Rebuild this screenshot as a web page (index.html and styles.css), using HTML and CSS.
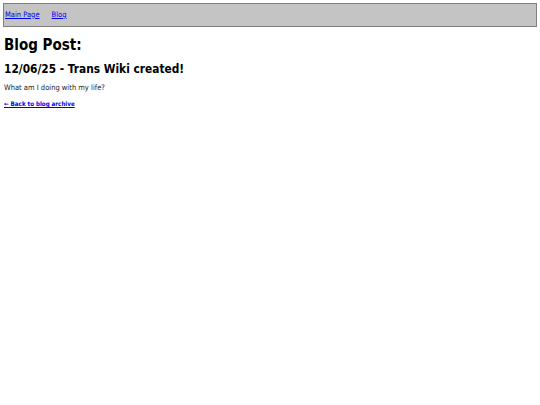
FILE: index.html
```html
<!DOCTYPE html>
<html>
<head>
<meta charset="utf-8">
<link rel="stylesheet" href="styles.css">
</head>
<body>
<nav class="topnav">
  <a href="#">Main Page</a>
  <a href="#">Blog</a>
</nav>
<h1 class="title">Blog Post:</h1>
<h2 class="post-title">12/06/25 - Trans Wiki created!</h2>
<p class="post-body">What am I doing with my life?</p>
<p class="back"><a href="#">← Back to blog archive</a></p>
</body>
</html>
```
FILE: styles.css
```css
body {
  margin: 3px 3px;
  font-family: "DejaVu Sans Condensed", "DejaVu Sans", Tahoma, sans-serif;
  color: #000;
  background: #fff;
}
.topnav {
  background: #c4c4c4;
  border: 1px solid #808080;
  height: 22px;
  display: flex;
  align-items: center;
  gap: 12px;
  padding: 0 1px;
  font-size: 7.5px;
  line-height: 8px;
}
.topnav a {
  color: #0000ee;
}
.title {
  font-size: 15px;
  line-height: 15px;
  margin: 11px 1px 9.5px;
}
.post-title {
  font-size: 11.8px;
  line-height: 12px;
  margin: 0 1px 9px;
}
.post-body {
  font-size: 7.5px;
  line-height: 7.5px;
  color: #222;
  margin: 0 1px 10px;
}
.back {
  font-size: 6.2px;
  line-height: 6.5px;
  font-weight: bold;
  margin: 0 1px;
}
.back a {
  color: #0000ee;
}
```
